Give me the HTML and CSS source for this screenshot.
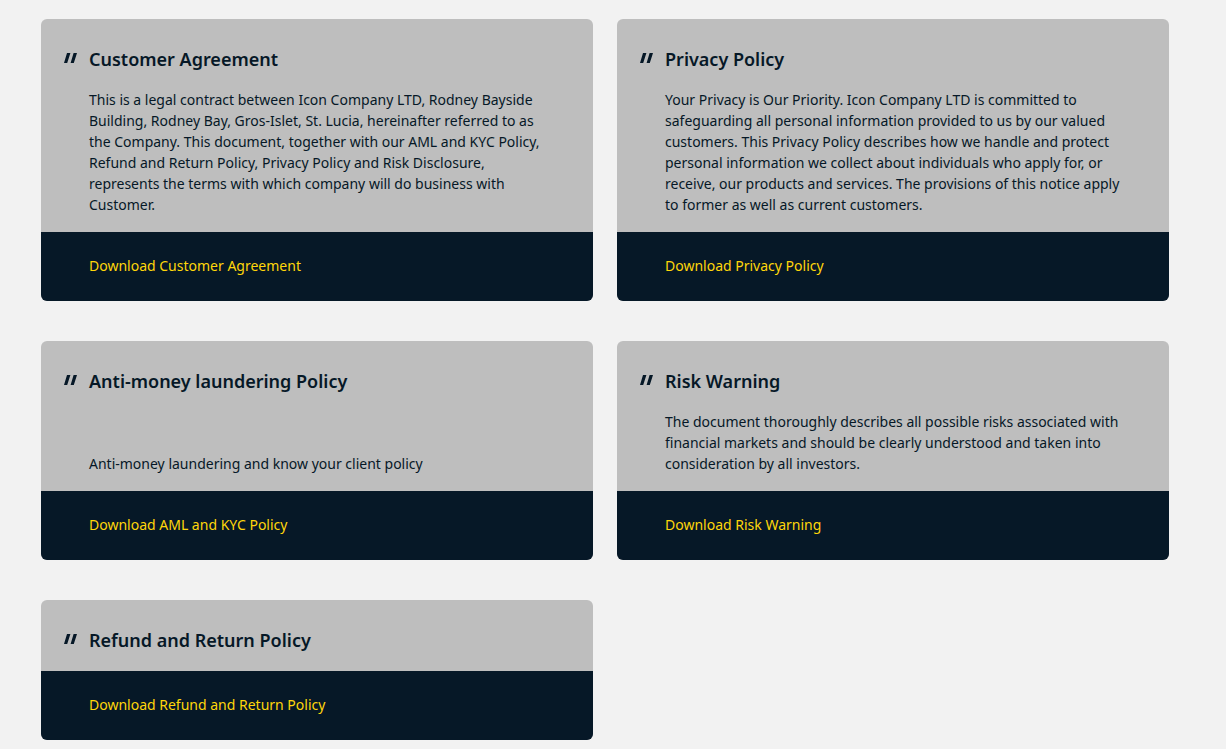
FILE: index.html
```html
<!DOCTYPE html>
<html lang="en">
<head>
<meta charset="utf-8">
<title>Legal Documents</title>
<link rel="stylesheet" href="styles.css">
</head>
<body>
<main class="docs">
  <article class="card">
    <div class="card-body">
      <h2 class="card-title"><svg class="quote" viewBox="0 0 13 10" aria-hidden="true"><path d="M3 0h3.4L3.2 10H0z M9.6 0h3.4L9.8 10H6.6z"/></svg>Customer Agreement</h2>
      <p class="card-text">This is a legal contract between Icon Company LTD, Rodney Bayside Building, Rodney Bay, Gros-Islet, St. Lucia, hereinafter referred to as the Company. This document, together with our AML and KYC Policy, Refund and Return Policy, Privacy Policy and Risk Disclosure, represents the terms with which company will do business with Customer.</p>
    </div>
    <div class="card-foot"><a href="#">Download Customer Agreement</a></div>
  </article>
  <article class="card">
    <div class="card-body">
      <h2 class="card-title"><svg class="quote" viewBox="0 0 13 10" aria-hidden="true"><path d="M3 0h3.4L3.2 10H0z M9.6 0h3.4L9.8 10H6.6z"/></svg>Privacy Policy</h2>
      <p class="card-text">Your Privacy is Our Priority. Icon Company LTD is committed to safeguarding all personal information provided to us by our valued customers. This Privacy Policy describes how we handle and protect personal information we collect about individuals who apply for, or receive, our products and services. The provisions of this notice apply to former as well as current customers.</p>
    </div>
    <div class="card-foot"><a href="#">Download Privacy Policy</a></div>
  </article>
  <article class="card">
    <div class="card-body">
      <h2 class="card-title"><svg class="quote" viewBox="0 0 13 10" aria-hidden="true"><path d="M3 0h3.4L3.2 10H0z M9.6 0h3.4L9.8 10H6.6z"/></svg>Anti-money laundering Policy</h2>
      <p class="card-text">Anti-money laundering and know your client policy</p>
    </div>
    <div class="card-foot"><a href="#">Download AML and KYC Policy</a></div>
  </article>
  <article class="card">
    <div class="card-body">
      <h2 class="card-title"><svg class="quote" viewBox="0 0 13 10" aria-hidden="true"><path d="M3 0h3.4L3.2 10H0z M9.6 0h3.4L9.8 10H6.6z"/></svg>Risk Warning</h2>
      <p class="card-text">The document thoroughly describes all possible risks associated with financial markets and should be clearly understood and taken into consideration by all investors.</p>
    </div>
    <div class="card-foot"><a href="#">Download Risk Warning</a></div>
  </article>
  <article class="card">
    <div class="card-body">
      <h2 class="card-title"><svg class="quote" viewBox="0 0 13 10" aria-hidden="true"><path d="M3 0h3.4L3.2 10H0z M9.6 0h3.4L9.8 10H6.6z"/></svg>Refund and Return Policy</h2>
    </div>
    <div class="card-foot"><a href="#">Download Refund and Return Policy</a></div>
  </article>
</main>
</body>
</html>
```
FILE: styles.css
```css
html, body {
  margin: 0;
  padding: 0;
  background: #f2f2f2;
}
body {
  font-family: "Noto Sans", "Open Sans", sans-serif;
  color: #061827;
}
.docs {
  display: grid;
  grid-template-columns: 552px 552px;
  column-gap: 24px;
  row-gap: 40.5px;
  padding: 19px 41px 10px;
}
.card {
  display: flex;
  flex-direction: column;
  border-radius: 6px;
  overflow: hidden;
  background: #bebebe;
}
.card-body {
  flex: 1;
  display: flex;
  flex-direction: column;
  justify-content: space-between;
  padding: 28px 48px 17px;
}
.card-title {
  position: relative;
  margin: 0 0 2px;
  font-size: 18px;
  line-height: 24px;
  font-weight: 600;
  color: #061827;
}
.quote {
  position: absolute;
  left: -25px;
  top: 6px;
  width: 13px;
  height: 10px;
  fill: #061827;
}
.card-text {
  margin: 16px 0 0;
  font-size: 14px;
  line-height: 21px;
  color: #061827;
}
.card-foot {
  background: #061827;
  height: 68.5px;
  box-sizing: border-box;
  padding: 0 48px 1px;
  display: flex;
  align-items: center;
}
.card-foot a {
  color: #ffd60a;
  font-size: 14px;
  text-decoration: none;
}
```
